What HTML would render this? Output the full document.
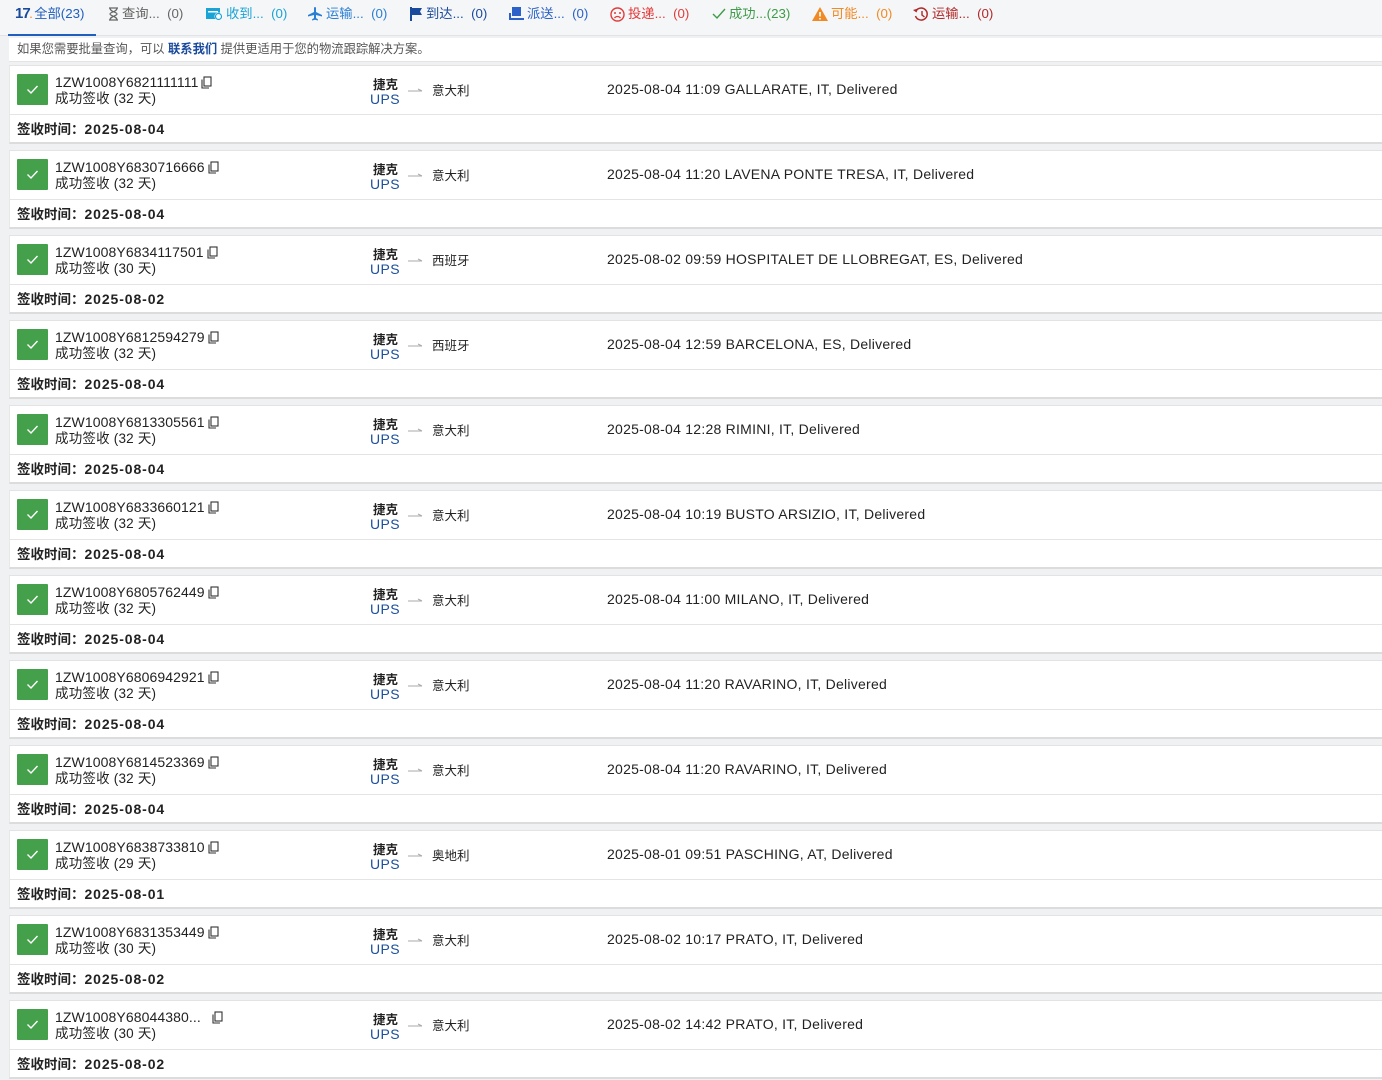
<!DOCTYPE html>
<html><head><meta charset="utf-8"><style>
*{margin:0;padding:0;box-sizing:border-box}
body{width:1382px;height:1080px;overflow:hidden;background:#f0f1f3;font-family:"Liberation Sans","Noto Sans CJK SC",sans-serif;color:#222;position:relative}
.tabs{position:absolute;left:0;top:0;width:1382px;height:36px;background:#f5f6f7;border-bottom:1px solid #e2e3e5;font-size:13.3px}
.tab{position:absolute;top:5px;height:18px;line-height:18px;white-space:nowrap;display:flex;align-items:center;gap:3px}
.tab svg{display:block}
.ul{position:absolute;left:8px;top:34px;width:88px;height:2px;background:#1f5fbf}
.notice{position:absolute;left:9px;top:38px;width:1373px;height:24px;background:#fff;border-bottom:1px solid #e4e4e4;font-size:12.3px;color:#555;line-height:23px;padding-left:8px}
.notice b{color:#1a4a9c;font-weight:bold}
.card{position:absolute;left:9px;width:1373px;height:79px;background:#fff;border-top:1px solid #e3e3e3;border-left:1px solid #e8e8e8;border-bottom:2px solid #dcdcdc}
.chk{position:absolute;left:7px;top:8px;width:31px;height:31px;background:#44a04a;border-radius:1px}
.chk svg{position:absolute;left:9px;top:10px}
.num{position:absolute;left:45px;top:8px;font-size:14px;color:#222;white-space:nowrap;letter-spacing:.1px}
.num svg{vertical-align:-2px;margin-left:3px}
.st{position:absolute;left:45px;top:21px;font-size:13.5px;color:#222;letter-spacing:.2px}
.from{position:absolute;left:363px;top:8px;font-size:12.5px;font-weight:bold;color:#222}
.ups{position:absolute;left:360px;top:25px;font-size:14px;color:#1c4f9c;letter-spacing:.4px}
.arr{position:absolute;left:398px;top:22px}
.to{position:absolute;left:422px;top:14px;font-size:12.5px;color:#222}
.ev{position:absolute;left:597px;top:15px;font-size:14px;color:#222;letter-spacing:.25px}
.div{position:absolute;left:0;right:0;top:48px;height:1px;background:#e4e4e4}
.dt{position:absolute;left:7px;top:52px;font-size:13.5px;font-weight:bold;color:#222}
.dt span{letter-spacing:.9px;font-size:14px}
</style></head><body>
<div class="tabs">
<div class="tab" style="left:15px;color:#1f5fbf"><span style="font-weight:bold;font-size:15px;color:#1a4a9c;letter-spacing:-1px">17<span style="color:#f08a24;font-size:9px">.</span></span>全部(23)</div>
<div class="tab" style="left:108px;color:#666"><svg width="11" height="14" viewBox="0 0 11 14"><path d="M1 1h9M1 13h9M2 1c0 4 7 4 7 6s-7 2-7 6M9 1c0 4-7 4-7 6s7 2 7 6" fill="none" stroke="#666" stroke-width="1.2"/></svg> 查询...&nbsp;&nbsp;(0)</div>
<div class="tab" style="left:206px;color:#1aa3d6"><svg width="17" height="14" viewBox="0 0 17 14"><rect x="0" y="1" width="14" height="11" fill="#1aa3d6"/><rect x="2" y="4" width="10" height="1.5" fill="#fff"/><circle cx="12.5" cy="9.5" r="4" fill="#fff"/><circle cx="12.5" cy="9.5" r="3" fill="none" stroke="#1aa3d6" stroke-width="1.2"/></svg>收到...&nbsp;&nbsp;(0)</div>
<div class="tab" style="left:307px;color:#2a7fd4"><svg width="16" height="14" viewBox="0 0 16 14"><path d="M8 0c1 0 1 1 1 2v3l6 3v1.5l-6-1.5v3l2 1.5v1l-3-.8-3 .8v-1l2-1.5v-3l-6 1.5V8l6-3V2c0-1 0-2 1-2z" fill="#2a7fd4"/></svg>运输...&nbsp;&nbsp;(0)</div>
<div class="tab" style="left:410px;color:#1a4a9c"><svg width="13" height="14" viewBox="0 0 13 14"><path d="M1 0v14" stroke="#1a4a9c" stroke-width="2"/><path d="M2 1h10l-2 3.5 2 3.5H2z" fill="#1a4a9c"/></svg>到达...&nbsp;&nbsp;(0)</div>
<div class="tab" style="left:509px;color:#2a62c9"><svg width="15" height="14" viewBox="0 0 15 14"><path d="M3 0h9v9H3z" fill="#2a62c9"/><path d="M0 11h15v2H0z" fill="#2a62c9"/><path d="M0 6h2v6H0z" fill="#2a62c9"/></svg>派送...&nbsp;&nbsp;(0)</div>
<div class="tab" style="left:610px;color:#e23b3b"><svg width="15" height="15" viewBox="0 0 15 15"><circle cx="7.5" cy="7.5" r="6.5" fill="none" stroke="#e23b3b" stroke-width="1.4"/><circle cx="5" cy="6" r="1" fill="#e23b3b"/><circle cx="10" cy="6" r="1" fill="#e23b3b"/><path d="M4.5 11c1.5-2 4.5-2 6 0" fill="none" stroke="#e23b3b" stroke-width="1.3"/></svg>投递...&nbsp;&nbsp;(0)</div>
<div class="tab" style="left:712px;color:#3e9b48"><svg width="14" height="12" viewBox="0 0 14 12"><path d="M1 6l4 4 8-9" fill="none" stroke="#3e9b48" stroke-width="1.4"/></svg>成功...(23)</div>
<div class="tab" style="left:812px;color:#f08a24"><svg width="16" height="14" viewBox="0 0 16 14"><path d="M8 0l8 14H0z" fill="#f08a24"/><path d="M8 5v4.5M8 11v1.5" stroke="#fff" stroke-width="1.6"/></svg>可能...&nbsp;&nbsp;(0)</div>
<div class="tab" style="left:913px;color:#b02a2a"><svg width="16" height="15" viewBox="0 0 16 15"><path d="M3 4a6 6 0 1 1-.5 5" fill="none" stroke="#b02a2a" stroke-width="1.5"/><path d="M0 3l3.5 2.5L5 1.5z" fill="#b02a2a"/><path d="M9 4v4l2.5 2" fill="none" stroke="#b02a2a" stroke-width="1.4"/></svg>运输...&nbsp;&nbsp;(0)</div>
<div class="ul"></div>
</div>
<div class="notice">如果您需要批量查询，可以 <b>联系我们</b> 提供更适用于您的物流跟踪解决方案。</div>
<div id="cards"></div>
<script>
var d=[["1ZW1008Y6821111111","32","意大利","2025-08-04 11:09 GALLARATE, IT, Delivered","2025-08-04"],
["1ZW1008Y6830716666","32","意大利","2025-08-04 11:20 LAVENA PONTE TRESA, IT, Delivered","2025-08-04"],
["1ZW1008Y6834117501","30","西班牙","2025-08-02 09:59 HOSPITALET DE LLOBREGAT, ES, Delivered","2025-08-02"],
["1ZW1008Y6812594279","32","西班牙","2025-08-04 12:59 BARCELONA, ES, Delivered","2025-08-04"],
["1ZW1008Y6813305561","32","意大利","2025-08-04 12:28 RIMINI, IT, Delivered","2025-08-04"],
["1ZW1008Y6833660121","32","意大利","2025-08-04 10:19 BUSTO ARSIZIO, IT, Delivered","2025-08-04"],
["1ZW1008Y6805762449","32","意大利","2025-08-04 11:00 MILANO, IT, Delivered","2025-08-04"],
["1ZW1008Y6806942921","32","意大利","2025-08-04 11:20 RAVARINO, IT, Delivered","2025-08-04"],
["1ZW1008Y6814523369","32","意大利","2025-08-04 11:20 RAVARINO, IT, Delivered","2025-08-04"],
["1ZW1008Y6838733810","29","奥地利","2025-08-01 09:51 PASCHING, AT, Delivered","2025-08-01"],
["1ZW1008Y6831353449","30","意大利","2025-08-02 10:17 PRATO, IT, Delivered","2025-08-02"],
["1ZW1008Y68044380...&nbsp;&nbsp;","30","意大利","2025-08-02 14:42 PRATO, IT, Delivered","2025-08-02"]];
var cp='<svg width="11" height="13" viewBox="0 0 11 13"><path d="M1 3.5v8.5h7" fill="none" stroke="#333" stroke-width="1.1"/><rect x="3" y="1" width="7" height="9" fill="none" stroke="#333" stroke-width="1.1"/></svg>';
var h='';
d.forEach(function(r,i){
h+='<div class="card" style="top:'+(65+85*i)+'px"><div class="chk"><svg width="13" height="11" viewBox="0 0 13 11"><path d="M1.5 5.5l3.5 3.5 6.5-7" fill="none" stroke="#fff" stroke-width="1.4"/></svg></div>'+
'<div class="num">'+r[0]+cp+'</div><div class="st">成功签收 ('+r[1]+' 天)</div>'+
'<div class="from">捷克</div><div class="ups">UPS</div>'+
'<svg class="arr" width="16" height="6" viewBox="0 0 16 6"><path d="M0 3h14M10 1l4 2" fill="none" stroke="#aaa" stroke-width="1"/></svg>'+
'<div class="to">'+r[2]+'</div><div class="ev">'+r[3]+'</div><div class="div"></div>'+
'<div class="dt">签收时间：<span>'+r[4]+'</span></div></div>';});
document.getElementById('cards').innerHTML=h;
</script>
</body></html>
